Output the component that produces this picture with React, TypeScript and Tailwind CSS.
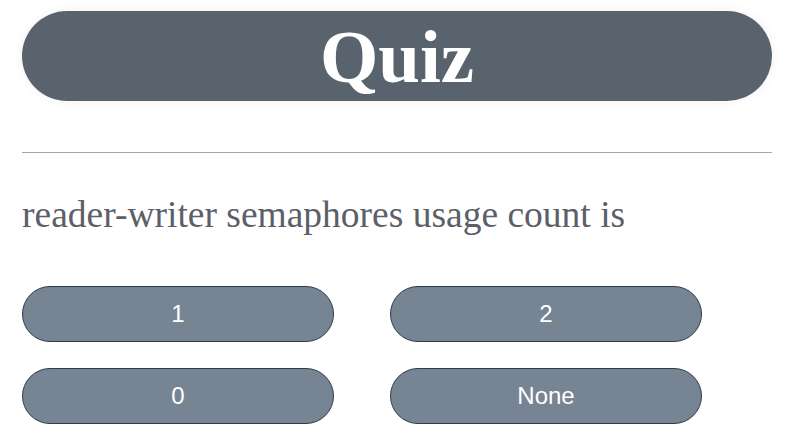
export default function App() {
  const answers = ["1", "2", "0", "None"]

  return (
    <div className="min-h-screen bg-white px-[22px] pt-[11px]" style={{ fontFamily: '"Liberation Serif", serif' }}>
      <header className="h-[90px] rounded-full bg-[#58636d] flex items-center justify-center shadow-[0_0_12px_rgba(0,0,0,0.06)]">
        <h1 className="text-[75px] font-bold text-white leading-none">Quiz</h1>
      </header>

      <hr className="mt-[51px] border-0 border-t border-[#a6a6a6]" />

      <p className="mt-[43px] text-[37.5px] leading-none text-[#5b6068]">reader-writer semaphores usage count is</p>

      <div className="mt-[52px] grid grid-cols-[312px_312px] gap-x-[56px] gap-y-[26px]">
        {answers.map((a) => (
          <button
            key={a}
            className="h-[56px] rounded-full border border-[#2e3b4c] bg-[#778494] text-white text-[24px]"
            style={{ fontFamily: '"Liberation Sans", Arial, sans-serif' }}
          >
            {a}
          </button>
        ))}
      </div>
    </div>
  )
}
